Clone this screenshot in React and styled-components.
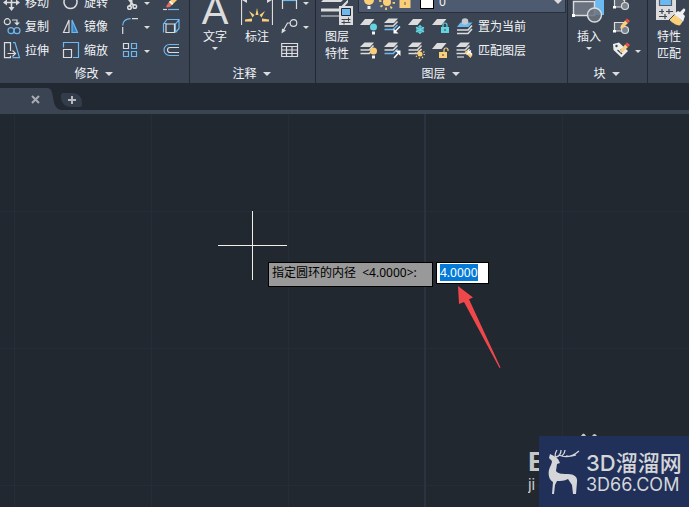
import React, { useEffect, useRef } from "react";
import styled, { createGlobalStyle } from "styled-components";

const GlobalStyle = createGlobalStyle`
  *, *::before, *::after { box-sizing: border-box; }
  body {
    margin: 0;
    background: #212830;
    color: #f2f4f6;
    font-family: "Noto Sans", "Noto Sans CJK SC", sans-serif;
    font-size: 12px;
  }
  button, input, select { font: inherit; color: inherit; }
`;

const W = "#dcdcdc";
const B = "#6cb8f0";
const Y = "#fbcf78";
const C = "#63d3e0";

/* ---------- layout ---------- */

const Page = styled.div`
  min-height: 100vh;
  display: flex;
  flex-direction: column;
  overflow: hidden;
`;

const Ribbon = styled.header`
  display: flex;
  align-items: flex-end;
  gap: 1px;
  height: 83px;
  overflow: hidden;
  background: #232933;
`;

const Panel = styled.section`
  flex: ${(p) => p.$grow || 0} 0 ${(p) => p.$basis}px;
  min-width: 0;
  background: #3b4453;
`;

const PanelBody = styled.div`
  display: flex;
  height: 72px;
  padding-left: ${(p) => p.$pad || 0}px;
`;

const PanelTitle = styled.button`
  display: flex;
  align-items: center;
  justify-content: center;
  gap: 6px;
  width: 100%;
  height: 20px;
  padding: 2px 2px 0 0;
  border: 0;
  background: none;
  line-height: 18px;
`;

const TitleSpace = styled.div`
  height: 20px;
`;

const Caret = styled.span`
  flex: none;
  width: 0;
  height: 0;
  border: solid transparent;
  border-width: ${(p) => (p.$large ? "4px 4px 0" : "3px 3px 0")};
  border-top-color: #dcdcdc;
`;

const ModifyGrid = styled.div`
  display: grid;
  grid-template-columns: 59px 60px 40px 24px;
  grid-auto-rows: 24px;
`;

const ToolStack = styled.div`
  display: grid;
  grid-auto-rows: 24px;
  margin-left: 3px;
`;

const Tool = styled.button`
  display: flex;
  align-items: center;
  gap: 4px;
  padding: 0;
  border: 0;
  background: none;
  white-space: nowrap;
  line-height: 18px;
`;

const BigTool = styled.button`
  display: flex;
  flex-direction: column;
  align-items: center;
  flex: 0 0 42px;
  height: 72px;
  padding: 0;
  border: 0;
  background: none;
  line-height: 17px;
  white-space: nowrap;

  > svg, > i { margin-bottom: 2px; }
  > ${Caret} { margin-top: 2px; }
`;

const LetterIcon = styled.i`
  height: 35px;
  font: normal 40px/38px "Liberation Sans", sans-serif;
  color: #dcdcdc;
`;

const LayerTools = styled.div`
  flex: 1;
  min-width: 0;
`;

const LayerPicker = styled.label`
  display: flex;
  align-items: center;
  height: 22px;
  margin: 0 1px 2px 0;
  padding-left: 1px;
  background: #4e5a6f;
  border: solid #2a303b;
  border-width: 0 1px 1px;
`;

const Swatch = styled.span`
  width: 14px;
  height: 14px;
  margin-left: 6px;
  background: #fff;
  border: 1px solid #000;
`;

const LayerSelect = styled.select`
  flex: 1;
  min-width: 0;
  padding: 0 0 0 5px;
  border: 0;
  appearance: none;
  background: none;
  outline: 0;
`;

const PickerCaret = styled(Caret)`
  margin-right: 3px;
`;

const LayerRow = styled.div`
  display: flex;
  align-items: center;
  gap: 6px;
  height: 24px;
  padding-left: 2px;
`;

const TabStrip = styled.nav`
  display: flex;
  align-items: flex-end;
  height: 31px;
  background: #222933;
  border-bottom: 4px solid #3b4453;
`;

const DrawingTab = styled.div`
  display: flex;
  align-items: center;
  justify-content: flex-end;
  width: 47px;
  height: 22px;
  padding-right: 6px;
  background: #3b4453;
`;

const IconButton = styled.button`
  display: flex;
  padding: 0;
  border: 0;
  background: none;
`;

const NewTab = styled(IconButton)`
  align-items: center;
  justify-content: center;
  width: 21px;
  height: 14px;
  margin-bottom: 3px;
  border-radius: 2px 9px 2px 9px;
  background: #333c4a;
`;

const Canvas = styled.main`
  position: relative;
  flex: 1;
  overflow: hidden;
  background-color: #212830;
  background-image:
    linear-gradient(#2b3340, #2b3340),
    linear-gradient(90deg, #262d38 1px, transparent 1px),
    linear-gradient(#262d38 1px, transparent 1px);
  background-size: 2px 100%, 137px 137px, 137px 137px;
  background-position: 424px 0, 14px 0, 0 97px;
  background-repeat: no-repeat, repeat, repeat;
`;

const Crosshair = styled.svg`
  position: absolute;
  left: 218px;
  top: 97px;
`;

const Prompt = styled.form`
  position: absolute;
  left: 268px;
  top: 148px;
  display: flex;
  align-items: flex-start;
  gap: 3px;
`;

const PromptLabel = styled.label`
  width: 165px;
  height: 25px;
  padding-left: 3px;
  border: 1px solid #000;
  background: #999;
  color: #000;
  line-height: 20px;
  white-space: pre;
`;

const PromptInput = styled.input`
  width: 53px;
  height: 22px;
  padding: 0 0 2px 3px;
  border: 1px solid #000;
  background: #fff;
  color: #000;
  outline: 0;

  &::selection {
    background: rgba(0, 120, 215, 0.99);
    color: #fff;
  }
`;

const Pointer = styled.svg`
  position: absolute;
  left: 456px;
  top: 171px;
`;

const Brand = styled.div`
  position: absolute;
  right: 0;
  bottom: 0;
  display: flex;
  align-items: center;
  width: 150px;
  height: 71px;
  padding-left: 7px;
  background: #213059;
  color: #d4d6da;
`;

const BrandText = styled.div`
  display: flex;
  flex-direction: column;
  margin-left: 6px;
`;

const BrandName = styled.strong`
  font: 500 22px/26px "Inter", "Noto Sans CJK SC", sans-serif;
  white-space: nowrap;
`;

const BrandSite = styled.span`
  font: 400 18px/18px "Inter", sans-serif;
`;

const Credit = styled.div`
  position: absolute;
  right: 143px;
  bottom: 13px;
  width: 18px;
  overflow: hidden;
  color: #c4c6c8;
  font-family: "Liberation Sans", sans-serif;
`;

const CreditMark = styled.b`
  display: block;
  font-size: 28px;
  line-height: 28px;
`;

const CreditSite = styled.span`
  display: block;
  font-size: 16px;
  line-height: 18px;
`;

const Paw = styled.svg`
  position: absolute;
  right: 90px;
  bottom: 71px;
`;

/* ---------- icons ---------- */

const Icon = ({ children, size = 18, h }) => (
  <svg width={size} height={h || size} viewBox={`0 0 ${size} ${h || size}`} fill="none" stroke={W} strokeWidth="1.2" aria-hidden="true">
    {children}
  </svg>
);

const MoveIcon = () => (
  <Icon>
    <path d="M8.500 3v12M2.500 8.500h12" strokeWidth="1.6" />
    <path d="M8.500 0l3 4h-6zM8.500 17l3-4h-6zM0 8.500l4-3v6zM17 8.500l-4-3v6z" fill={W} stroke="none" />
  </Icon>
);
const RotateIcon = () => (
  <Icon><path d="M2.500 5.500a6.500 6.500 0 1 0 12 0M14.500 5.500L11 3" strokeWidth="1.5" /></Icon>
);
const TrimIcon = () => (
  <Icon>
    <path d="M5 3l7 9M9.500 1v8l-2 4" strokeWidth="2" />
    <circle cx="7.500" cy="13.500" r="1.800" strokeWidth="1.500" />
    <circle cx="12.800" cy="12.500" r="1.800" strokeWidth="1.500" />
  </Icon>
);
const EraseIcon = () => (
  <Icon>
    <path d="M1 15.500h4" /><path d="M6 15.500h11" stroke={B} />
    <path d="M7 8l7-7 3 3-7 7z" fill={Y} stroke="none" />
    <path d="M7 8l3 3-2 2-3 .5-1-1z" fill="#e66a5c" stroke="none" />
    <path d="M7 8l3 3 1.200-1.200-3-3z" fill="#fff" stroke="none" />
  </Icon>
);
const CopyIcon = () => (
  <Icon>
    <circle cx="4.300" cy="3.700" r="3" />
    <path d="M9 2h5v3" /><path d="M11 4.500h6l-3 3z" fill={W} stroke="none" />
    <circle cx="8" cy="12.700" r="3" stroke={B} /><circle cx="14" cy="12.700" r="3" stroke={B} />
  </Icon>
);
const MirrorIcon = () => (
  <Icon>
    <path d="M1.500 14.500h5.500V2z" />
    <path d="M10 14.500h5.500L10 2z" stroke={B} fill="#3a83bd" />
  </Icon>
);
const FilletIcon = () => (
  <Icon><path d="M.7 7.500Q1 1 8.700.7" stroke={B} /><path d="M10 .7h6M.7 9v7" /></Icon>
);
const BoxIcon = () => (
  <Icon>
    <path d="M1.500 14.500V6L5 1.500h12v9l-3.500 4M1.500 5.500h3M14 5.500l3-4M13.500 5v9.500" stroke={B} />
    <path d="M4 6h8.500v8.500H4z" stroke={W} />
  </Icon>
);
const StretchIcon = () => (
  <Icon>
    <path d="M7.500 9V.7h-6v15h6v-2" /><path d="M4.500 11.500h8M9.500 8.500l3 3-3 3" />
    <path d="M10 .7h2l4.500 15H9.500" stroke={B} />
  </Icon>
);
const ScaleIcon = () => (
  <Icon><path d="M1.500 5.500v-5h15v15H11" stroke={B} /><path d="M1.500 7.500h8v8h-8z" /></Icon>
);
const ArrayIcon = () => (
  <Icon>
    <path d="M1.500 1.500h5v5h-5z" />
    <path d="M9.500 1.500h5v5h-5zM1.500 9.500h5v5h-5zM9.500 9.500h5v5h-5z" stroke={B} />
  </Icon>
);
const OffsetIcon = () => (
  <Icon>
    <path d="M17 2.500H7.500a5.500 5.500 0 0 0 0 11H17" stroke={B} />
    <path d="M17 5.500H8a2.500 2.500 0 0 0 0 5h9" />
  </Icon>
);
const DimensionIcon = () => (
  <Icon size={32} h={35}>
    <path d="M.5 9v25M31.500 9v25M1 8.500h30" />
    <path d="M1 9l5-3v6zM31 9l-5-3v6z" fill={W} stroke="none" />
    <g fill={Y} stroke="none">
      <path d="M14.500 24L16 17l1.500 7zM8 20l5.500 4-2 2.500zM24 20l-5.500 4 2 2.500zM4 28.500l7-1v3H4zM28 28.500l-7-1v3h7z" />
    </g>
  </Icon>
);
const LinearIcon = () => (
  <Icon><path d="M1.500 2v13M15.500 2v13" /><path d="M2 6.500h13" stroke={B} /></Icon>
);
const LeaderIcon = () => (
  <Icon>
    <circle cx="12.500" cy="5" r="3.300" />
    <path d="M9 5H6.500L2 13" /><path d="M.5 15.500l.5-5 4 2z" fill={W} stroke="none" />
  </Icon>
);
const TableIcon = () => (
  <Icon><path d="M.7 1.500h15.800v13H.7zM.7 4.500h15.800M.7 8h15.800M.7 11.500h15.800M5.500 4v10.500M11 4v10.500" /></Icon>
);
const Sheet = () => <path d="M5 1h9.500l-5 6H0z" fill={W} stroke="none" />;
const Stack = ({ top = W, mid = W, low = W }) => (
  <g strokeWidth="1.500">
    <path d="M4.500.5h9.500l-4 4.500H0z" fill={top} stroke="none" />
    <path d="M.5 8h8.700l4.300-4.500" stroke={mid} />
    <path d="M.5 11.500h8.700l4.300-4.500" stroke={low} />
  </g>
);
const Bulb = ({ color, x = 13.5, y = 9, r = 3.5 }) => (
  <g stroke="none"><circle cx={x} cy={y} r={r} fill={color} /><path d={`M${x - 1.5} ${y + r + 1}h3v3h-3z`} fill="#f2f2f2" /></g>
);
const Rays = ({ color, x, y, r }) => (
  <g stroke={color}>
    <circle cx={x} cy={y} r={r * 0.5} fill={color} stroke="none" />
    <circle cx={x} cy={y} r={r * 0.85} strokeWidth={r * 0.3} strokeDasharray={`${r * 0.22} ${r * 0.4475}`} />
  </g>
);
const Lock = ({ color, open, x = 8, y = 9 }) => (
  <g stroke={color}>
    <path d={`M${x} ${y}h8v6h-8z`} fill={color} stroke="none" />
    <path d={open ? `M${x + 5} ${y}v-2a2 2 0 0 1 4 0v1` : `M${x + 2} ${y}v-2a2 2 0 0 1 4 0v2`} />
    <path d={`M${x + 3.5} ${y + 2}h1v2h-1z`} fill="#3b4453" stroke="none" />
  </g>
);
const LayerOff = () => <Icon><Sheet /><Bulb color={C} /></Icon>;
const LayerIsolate = () => (
  <Icon><Stack low={B} /><path d="M16 8.500l-5 5" strokeWidth="1.500" stroke="#fff" /><path d="M9.500 15.500v-5l5 5z" fill="#fff" stroke="none" /></Icon>
);
const LayerFreeze = () => (
  <Icon><Sheet /><path d="M12 7v9M8 9.300l8 4.500M16 9.300l-8 4.500" stroke={C} strokeWidth="1.500" /><circle cx="12" cy="11.500" r="3" stroke={C} /></Icon>
);
const LayerLock = () => <Icon><Sheet /><Lock color={C} x={9} /></Icon>;
const LayerOn = () => <Icon><Stack /><Bulb color={Y} /></Icon>;
const LayerUnisolate = () => (
  <Icon><Stack low={B} /><path d="M10 16l4-4.500" stroke="#fff" strokeWidth="1.500" /><path d="M11 8.500h5.500V14z" fill="#fff" stroke="none" /></Icon>
);
const LayerThaw = () => <Icon><Stack /><Rays color={Y} x={12} y={12} r={5} /></Icon>;
const LayerUnlock = () => <Icon><Sheet /><Lock color={Y} x={7} y={10} open /></Icon>;
const MakeCurrent = () => (
  <Icon>
    <path d="M4.500 4.500h12l-4 4.500H1z" fill={B} stroke="none" />
    <path d="M1 12h11l4-4.500M1 15.500h11l4-4.500" strokeWidth="1.600" />
    <circle cx="9" cy="3.500" r="3.300" fill="#c5c9cf" stroke="none" />
  </Icon>
);
const MatchLayer = () => (
  <Icon>
    <Stack /><path d="M1 15h7" />
    <path d="M8.500 10l3-2 5 5-2 3z" fill={Y} stroke="none" />
    <path d="M10.500 12.500l4.500-4M12 8.500l4 4" stroke="#fff" strokeWidth="1.500" />
  </Icon>
);
const BulbIcon = () => <Icon><Bulb color={Y} x={9} y={7} r={5} /></Icon>;
const SunIcon = () => <Icon><Rays color={Y} x={9} y={9} r={8} /></Icon>;
const LockIcon = () => (
  <Icon><path d="M3.500 6h11v9h-11z" fill={Y} stroke="none" /><path d="M8.500 9h1v3h-1z" fill="#4e5a6f" stroke="none" /><path d="M9 6V3a2 2 0 0 1 4 0" stroke={Y} /></Icon>
);
const LayerPropsIcon = () => (
  <Icon size={34} h={35}>
    <g fill={W} stroke="none">
      <path d="M8 5h20l-7 7H1zM1 18.500h18l9-9v3l-8 9H1zM1 25.500h18l9-9v4l-7 6H1z" transform="translate(0 -1)" />
      <path d="M19 15h14v19H19z" />
      <path d="M21.500 17.500h9v7h-9z" fill={B} stroke="#222933" strokeWidth="1" />
    </g>
    <path d="M21.500 28.500h9M21.500 31.500h9M28.500 26.500v4M24 29.500v4" stroke="#3b4453" strokeWidth="1" />
  </Icon>
);
const InsertIcon = () => (
  <Icon size={34} h={35}>
    <path d="M23 4h9v20h-9z" fill={B} stroke="none" />
    <path d="M1.500 10.500h21v14h-21z" fill="#6b7380" strokeWidth="1.400" />
    <circle cx="22.500" cy="24" r="7" fill="#6b7380" fillOpacity=".85" strokeWidth="1.400" />
    <path d="M0 23h3v3H0z" fill="#fff" stroke="none" />
  </Icon>
);
const Pencil = () => (
  <g stroke="none"><path d="M8 7.500l4-5 3 2.500-4.500 4.500L7 10.500z" fill={Y} /><path d="M12 2.500l2-2 3 2.500-2 2z" fill="#e8544a" /></g>
);
const BlockSketch = () => (
  <><path d="M1.500 4.500h10v8.500h-10z" fill="#5d6674" /><circle cx="12" cy="12" r="3.500" fill="#7b838f" /><path d="M0 12h3v2.500H0z" fill="#fff" stroke="none" /></>
);
const CreateBlock = () => <Icon><BlockSketch /><Rays color={Y} x={11} y={3} r={4} /></Icon>;
const EditBlock = () => <Icon><BlockSketch /><Pencil /></Icon>;
const EditAttribute = () => (
  <Icon><path d="M0 2l6-1.500L15 9l-6.500 6.500L.5 8z" fill="#ececec" stroke="none" /><circle cx="3.500" cy="4" r="1.200" fill="#3b4453" stroke="none" /><path d="M4.500 8l4.500 4M8 7l1 3" stroke="#3b4453" /><Pencil /></Icon>
);
const MatchPropsIcon = () => (
  <Icon size={34} h={35}>
    <path d="M4 3h20v26H4z" fill={W} stroke="none" />
    <path d="M7.500 5.500h12v9h-12z" fill={B} stroke="#56606d" />
    <path d="M7 20.500h5M14 20.500h7M7 25.500h8M10 18v5M17 18v5M13 23v5" stroke="#3b4453" />
    <path d="M17 29l6-6 8 8-3 4c-4 0-8-3-11-6z" fill={Y} stroke="#3b4453" strokeWidth="1" />
    <path d="M22 23l4-3 2 1 3-3c1-1 3 0 2 2l-2 3 2 2-2 6z" fill="#f0f0f0" stroke="none" />
  </Icon>
);
const Deer = () => (
  <svg width="34" height="46" viewBox="0 0 34 46" fill="#d4d6da" stroke="#d4d6da" aria-hidden="true">
    <path stroke="none" d="M4 5l4 2 4 3 2 4-3 1-1 7c2 3 7 3 12 3 6 0 10 3 9 8l-1 12h-3l-1-9-4-6c-4 2-7 2-11 2l-2 4-1 9H6l1-12C3 31 2 25 3 21c1-4 3-6 3-9l-3-3z" />
    <path fill="none" strokeWidth="1.300" d="M10 9C8 6 9 4 11 1M10 8c4-1 5-4 5-7M13 6c6 3 13 2 20-4M16 7c2-2 3-3 3-6M20 7c4 1 7 0 10-1" />
  </svg>
);

/* ---------- app ---------- */

const ToolButton = ({ icon, label, name, menu }) => (
  <Tool type="button" aria-label={label || name}>
    {icon}
    {label}
    {menu && <Caret />}
  </Tool>
);

const Title = ({ children }) => (
  <PanelTitle type="button">{children}<Caret $large /></PanelTitle>
);

export default function App() {
  const field = useRef(null);
  useEffect(() => {
    field.current.focus();
    field.current.select();
  }, []);

  return (
    <Page>
      <GlobalStyle />
      <Ribbon>
        <Panel $basis={189}>
          <PanelBody $pad={3}>
            <ModifyGrid>
              <ToolButton icon={<MoveIcon />} label="移动" />
              <ToolButton icon={<RotateIcon />} label="旋转" />
              <ToolButton icon={<TrimIcon />} name="修剪" menu />
              <ToolButton icon={<EraseIcon />} name="删除" />
              <ToolButton icon={<CopyIcon />} label="复制" />
              <ToolButton icon={<MirrorIcon />} label="镜像" />
              <ToolButton icon={<FilletIcon />} name="圆角" menu />
              <ToolButton icon={<BoxIcon />} name="分解" />
              <ToolButton icon={<StretchIcon />} label="拉伸" />
              <ToolButton icon={<ScaleIcon />} label="缩放" />
              <ToolButton icon={<ArrayIcon />} name="阵列" menu />
              <ToolButton icon={<OffsetIcon />} name="偏移" />
            </ModifyGrid>
          </PanelBody>
          <Title>修改</Title>
        </Panel>

        <Panel $basis={125}>
          <PanelBody $pad={4}>
            <BigTool type="button"><LetterIcon>A</LetterIcon>文字<Caret /></BigTool>
            <BigTool type="button"><DimensionIcon />标注</BigTool>
            <ToolStack>
              <ToolButton icon={<LinearIcon />} name="线性" menu />
              <ToolButton icon={<LeaderIcon />} name="引线" menu />
              <ToolButton icon={<TableIcon />} name="表格" />
            </ToolStack>
          </PanelBody>
          <Title>注释</Title>
        </Panel>

        <Panel $basis={251}>
          <PanelBody>
            <BigTool type="button"><LayerPropsIcon /><span>图层</span><span>特性</span></BigTool>
            <LayerTools>
              <LayerPicker>
                <BulbIcon /><SunIcon /><LockIcon /><Swatch />
                <LayerSelect aria-label="图层列表" defaultValue="0"><option>0</option></LayerSelect>
                <PickerCaret $large />
              </LayerPicker>
              <LayerRow>
                <ToolButton icon={<LayerOff />} name="关" />
                <ToolButton icon={<LayerIsolate />} name="隔离" />
                <ToolButton icon={<LayerFreeze />} name="冻结" />
                <ToolButton icon={<LayerLock />} name="锁定" />
                <ToolButton icon={<MakeCurrent />} label="置为当前" />
              </LayerRow>
              <LayerRow>
                <ToolButton icon={<LayerOn />} name="打开所有图层" />
                <ToolButton icon={<LayerUnisolate />} name="取消隔离" />
                <ToolButton icon={<LayerThaw />} name="解冻所有图层" />
                <ToolButton icon={<LayerUnlock />} name="解锁" />
                <ToolButton icon={<MatchLayer />} label="匹配图层" />
              </LayerRow>
            </LayerTools>
          </PanelBody>
          <Title>图层</Title>
        </Panel>

        <Panel $basis={79}>
          <PanelBody>
            <BigTool type="button"><InsertIcon />插入<Caret /></BigTool>
            <ToolStack>
              <ToolButton icon={<CreateBlock />} name="创建" />
              <ToolButton icon={<EditBlock />} name="编辑" />
              <ToolButton icon={<EditAttribute />} name="编辑属性" menu />
            </ToolStack>
          </PanelBody>
          <Title>块</Title>
        </Panel>

        <Panel $basis={40} $grow={1}>
          <PanelBody>
            <BigTool type="button"><MatchPropsIcon /><span>特性</span><span>匹配</span></BigTool>
          </PanelBody>
          <TitleSpace />
        </Panel>
      </Ribbon>

      <TabStrip>
        <DrawingTab>
          <IconButton type="button" aria-label="关闭">
            <svg width="11" height="11" viewBox="0 0 11 11" stroke="#a9adb3" strokeWidth="2"><path d="M2 2l7 7M9 2L2 9" /></svg>
          </IconButton>
        </DrawingTab>
        <svg width="14" height="22" viewBox="0 0 14 22" fill="#3b4453" aria-hidden="true"><path d="M0 0c4 0 5 3 6 9 1 8 3 12 8 13H0z" /></svg>
        <NewTab type="button" aria-label="新图形">
          <svg width="8" height="8" viewBox="0 0 8 8" stroke="#b5b8bd" strokeWidth="2"><path d="M4 0v8M0 4h8" /></svg>
        </NewTab>
      </TabStrip>

      <Canvas>
        <Crosshair width="69" height="69" viewBox="0 0 69 69" stroke="#f0f0e8" aria-hidden="true"><path d="M34.500 0v69M0 34.500h69" /></Crosshair>
        <Prompt onSubmit={(e) => e.preventDefault()}>
          <PromptLabel htmlFor="diameter">{"指定圆环的内径  <4.0000>:"}</PromptLabel>
          <PromptInput id="diameter" ref={field} defaultValue="4.0000" />
        </Prompt>
        <Pointer width="46" height="84" viewBox="0 0 46 84" fill="#f0484a" aria-hidden="true">
          <path d="M2 1l15 11.500-4 1.800L44.500 82.500 43.500 83 8 17l-5 2z" />
        </Pointer>
        <Credit><CreditMark>B</CreditMark><CreditSite>ji</CreditSite></Credit>
        <Paw width="20" height="3" viewBox="0 0 20 3" fill="#c4c6c8" aria-hidden="true"><path d="M2 3q2.500-5 5 0zM13 3q2.500-4 5 0z" /></Paw>
        <Brand>
          <Deer />
          <BrandText><BrandName>3D溜溜网</BrandName><BrandSite>3D66.COM</BrandSite></BrandText>
        </Brand>
      </Canvas>
    </Page>
  );
}
